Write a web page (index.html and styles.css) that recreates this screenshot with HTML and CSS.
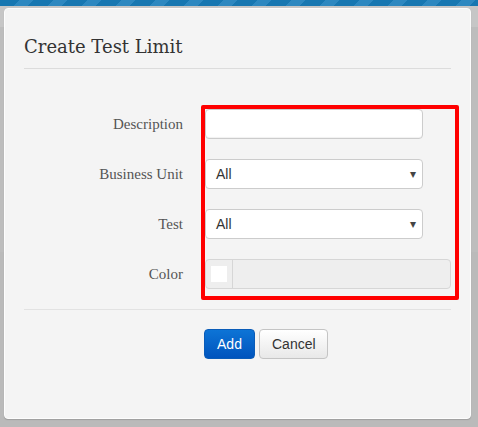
FILE: index.html
```html
<!DOCTYPE html>
<html>
<head>
<meta charset="utf-8">
<link rel="stylesheet" href="styles.css">
</head>
<body>
<div class="topbar"></div>
<div class="modal">
  <div class="modal-header">
    <h3 class="modal-title">Create Test Limit</h3>
  </div>
  <div class="modal-body">
    <div class="form-grid">
      <label class="form-label">Description</label>
      <div class="field"><input class="text-input" type="text"></div>
      <label class="form-label">Business Unit</label>
      <div class="field"><div class="select"><span>All</span><span class="caret">&#9662;</span></div></div>
      <label class="form-label">Test</label>
      <div class="field"><div class="select"><span>All</span><span class="caret">&#9662;</span></div></div>
      <label class="form-label">Color</label>
      <div class="field"><div class="color-input"><div class="swatch-wrap"><div class="swatch"></div></div><div class="color-text"></div></div></div>
    </div>
    <div class="highlight"></div>
  </div>
  <div class="modal-footer">
    <button class="btn btn-primary">Add</button>
    <button class="btn btn-default">Cancel</button>
  </div>
</div>
</body>
</html>
```
FILE: styles.css
```css
html, body {
  margin: 0;
  padding: 0;
}
body {
  width: 478px;
  height: 427px;
  overflow: hidden;
  background: linear-gradient(to bottom, #c6c6c6 0, #c6c6c6 27px, #bdbdbd 27px, #bdbdbd 252px, #bababa 252px);
  font-family: "Liberation Sans", Arial, sans-serif;
}
.topbar {
  height: 6px;
  background: repeating-linear-gradient(135deg, #1777b1 0, #1777b1 14px, #2d88c0 14px, #2d88c0 24px);
}
.modal {
  position: relative;
  margin: 2px 0 0 4px;
  width: 465px;
  height: 409px;
  background: #f4f4f4;
  border: 1px solid #fdfdfd;
  border-radius: 4px;
  box-shadow: 0 1px 1px rgba(0,0,0,0.15);
}
.modal-header {
  margin: 0 19px;
  padding-top: 26px;
  height: 33px;
  border-bottom: 1px solid #dcdcdc;
}
.modal-title {
  margin: 0;
  font-family: "DejaVu Serif", Georgia, serif;
  font-weight: normal;
  font-size: 18px;
  line-height: 24px;
  color: #333;
}
.modal-body {
  position: relative;
  margin: 0 19px;
  padding: 40px 0 20px;
  border-bottom: 1px solid #e2e2e2;
}
.form-grid {
  display: grid;
  grid-template-columns: 159px 1fr;
  column-gap: 22px;
  row-gap: 20px;
  align-items: center;
}
.form-label {
  text-align: right;
  font-family: Georgia, "Liberation Serif", serif;
  font-size: 15px;
  color: #555;
}
.field {
  height: 30px;
}
.text-input {
  box-sizing: border-box;
  width: 218px;
  height: 30px;
  margin: 0;
  border: 1px solid #ccc;
  border-radius: 4px;
  background: #fff;
  box-shadow: inset 0 -1px 1px rgba(0,0,0,0.06);
  outline: none;
}
.select {
  box-sizing: border-box;
  width: 218px;
  height: 30px;
  border: 1px solid #ccc;
  border-radius: 4px;
  background: #fff;
  display: flex;
  align-items: center;
  justify-content: space-between;
  padding: 0 6px 0 10px;
  font-size: 14px;
  color: #333;
}
.caret {
  font-size: 12px;
  color: #444;
}
.color-input {
  box-sizing: border-box;
  width: 246px;
  height: 30px;
  border: 1px solid #d6d6d6;
  border-radius: 4px;
  background: #eeeeee;
  display: flex;
}
.swatch-wrap {
  width: 26px;
  border-right: 1px solid #d6d6d6;
  display: flex;
  align-items: center;
  justify-content: center;
}
.swatch {
  width: 16px;
  height: 16px;
  background: #fff;
}
.color-text {
  flex: 1;
}
.highlight {
  position: absolute;
  left: 177px;
  top: 36px;
  width: 250px;
  height: 187px;
  border: 4px solid #ff0000;
  border-radius: 2px;
  pointer-events: none;
}
.modal-footer {
  padding: 19px 0 0 199px;
  display: flex;
  gap: 4px;
}
.btn {
  box-sizing: border-box;
  height: 30px;
  border-radius: 4px;
  font-family: "Liberation Sans", Arial, sans-serif;
  font-size: 14px;
  padding: 0 12px;
  margin: 0;
}
.btn-primary {
  width: 51px;
  color: #fff;
  border: 1px solid #0a5cb8;
  background: linear-gradient(to bottom, #0d74d6, #0054bd);
}
.btn-default {
  width: 69px;
  color: #333;
  border: 1px solid #c4c4c4;
  background: linear-gradient(to bottom, #ffffff, #e8e8e8);
}
```
